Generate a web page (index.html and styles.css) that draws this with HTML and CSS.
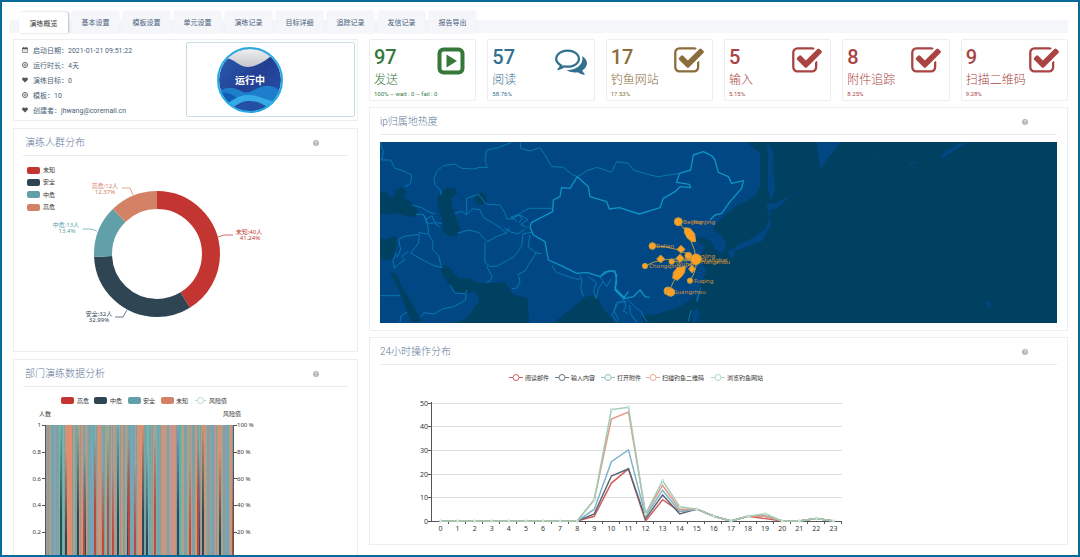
FILE: index.html
```html
<!DOCTYPE html>
<html lang="zh-CN">
<head>
<meta charset="utf-8">
<title>演练概览</title>
<link rel="stylesheet" href="styles.css">
</head>
<body>
<svg class="defs" aria-hidden="true">
  <symbol id="check" viewBox="0 0 1792 1792"><path d="M1472 930v318q0 119-84.5 203.5t-203.5 84.5h-832q-119 0-203.5-84.5t-84.5-203.5v-832q0-119 84.5-203.5t203.5-84.5h832q63 0 117 25 15 7 18 23 3 17-9 29l-49 49q-10 10-23 10-3 0-9-2-23-6-45-6h-832q-66 0-113 47t-47 113v832q0 66 47 113t113 47h832q66 0 113-47t47-113v-254q0-13 9-22l64-64q10-10 23-10 6 0 12 3 20 8 20 29zm231-489l-814 814q-24 24-57 24t-57-24l-430-430q-24-24-24-57t24-57l110-110q24-24 57-24t57 24l263 263 647-647q24-24 57-24t57 24l110 110q24 24 24 57t-24 57z"/></symbol>
  <symbol id="comments" viewBox="0 0 1792 1792"><path d="M704 384q-153 0-286 52t-211.5 141-78.5 191q0 82 53 158t149 132l97 56-35 84q34-20 62-39l44-31 53 10q78 14 153 14 153 0 286-52t211.5-141 78.5-191-78.5-191-211.5-141-286-52zm0-128q191 0 353.5 68.5t256.5 186.5 94 257-94 257-256.5 186.5-353.5 68.5q-86 0-176-16-124 88-278 128-36 9-86 16h-3q-11 0-20.5-8t-11.5-21q-1-3-1-6.500t.5-6.500 2-6l2.500-5 3.500-5.500 4-5 4.500-5 4-4.500q5-6 23-25t26-29.500 22.500-29 25-38.500 20.500-44q-124-72-195-177t-71-224q0-139 94-257t256.500-186.500 353.500-68.500zm822 1169q10 24 20.500 44t25 38.500 22.500 29 26 29.500 23 25q1 1 4 4.500t4.500 5 4 5 3.500 5.500l2.500 5 2 6 .5 6.500-1 6.500q-3 14-13 22t-22 7q-50-7-86-16-154-40-278-128-90 16-176 16-271 0-472-132 58 4 88 4 161 0 309-45t264-129q125-92 192-212t67-254q0-77-23-152 129 71 204 178t75 230q0 120-71 224.500t-195 176.500z"/></symbol>
  <symbol id="play" viewBox="0 0 28 28"><rect x="2.500" y="2.500" width="23" height="23" rx="4" fill="none" stroke="currentColor" stroke-width="4"/><path d="M9.500 7.500v13l10.500-6.500z"/></symbol>
  <symbol id="calendar" viewBox="0 0 14 14"><path d="M1 2.500h12v10.500H1z" fill="none" stroke="currentColor" stroke-width="1.500"/><path d="M1 2h12v3H1zM3 0h2v3H3zM9 0h2v3H9z"/><path d="M3 7h8M3 10h8M5 5v8M9 5v8" stroke="currentColor" stroke-width=".3"/></symbol>
  <symbol id="plus" viewBox="0 0 14 14"><circle cx="7" cy="7" r="6" fill="none" stroke="currentColor" stroke-width="2"/><path d="M7 3.500v7M3.500 7h7" stroke="currentColor" stroke-width="1.500"/></symbol>
  <symbol id="heart" viewBox="0 0 14 14"><path d="M7 13 1 7C-1 4 1 1 4 1c1.500 0 2.500 1 3 2 .5-1 1.500-2 3-2 3 0 5 3 3 6z"/></symbol>
  <symbol id="help" viewBox="0 0 14 14"><circle cx="7" cy="7" r="7"/><path d="M4.800 5.500C5 2.500 9.500 3 9.200 5.500 9 7 7 7 7 8.500M7 10v1.800" fill="none" stroke="#fff" stroke-width="1.600"/></symbol>
</svg>
<div class="frame">
  <nav class="tabs">
    <button class="tab active">演练概览</button>
    <button class="tab">基本设置</button>
    <button class="tab">模板设置</button>
    <button class="tab">单元设置</button>
    <button class="tab">演练记录</button>
    <button class="tab">目标详细</button>
    <button class="tab">追踪记录</button>
    <button class="tab">发信记录</button>
    <button class="tab">报告导出</button>
  </nav>
  <main class="columns">
    <div class="col left">
      <section class="panel info">
        <ul class="facts">
          <li><svg><use href="#calendar"/></svg>启动日期：2021-01-21 09:51:22</li>
          <li><svg><use href="#plus"/></svg>运行时长：4天</li>
          <li><svg><use href="#heart"/></svg>演练目标：0</li>
          <li><svg><use href="#plus"/></svg>模板：10</li>
          <li><svg><use href="#heart"/></svg>创建者：jhwang@coremail.cn</li>
        </ul>
        <div class="status">
          <svg viewBox="217 47 66 66" role="img" aria-label="运行中">
            <defs>
              <linearGradient id="deep" x1="0" y1="0" x2="1" y2="1"><stop offset="0" stop-color="#2c62b4"/><stop offset=".5" stop-color="#233f92"/><stop offset="1" stop-color="#2456ae"/></linearGradient>
              <linearGradient id="silver" x1="0" y1="0" x2="0" y2="1"><stop offset="0" stop-color="#f4f4f4"/><stop offset="1" stop-color="#c4c6ca"/></linearGradient>
              <clipPath id="disc"><circle cx="250" cy="80" r="31"/></clipPath>
            </defs>
            <g clip-path="url(#disc)">
              <path fill="url(#deep)" d="M217 47h66v66h-66z"/>
              <path fill="url(#silver)" d="M217 47h66v12c-8-6-12-3-17 1-8 5-13 7-18 7-8 0-12-6-18-8-5-1-8 0-13 2z"/>
              <path fill="#1d7fcb" d="M217 92c12-7 18-4 26 0 8 3 16-8 26-6 6 0 10 4 14 8v20h-66z"/>
              <path fill="#0f5db4" d="M217 93c10-2 16 2 22 6l10 14h-32z"/>
              <path fill="#35aae6" d="M221 106c10-3 14-11 28-11 12 0 16 6 31 7l-8 14h-46z"/>
              <path fill="#2450a4" d="M234 107c6-5 10-6 16-6s12 2 18 7l-8 6h-20z"/>
            </g>
            <circle cx="250" cy="80" r="32" fill="none" stroke="#27aae1" stroke-width="2"/>
            <text class="status-text" x="250" y="84">运行中</text>
          </svg>
        </div>
      </section>

      <section class="panel">
        <header><h2>演练人群分布</h2><button class="help" aria-label="帮助"><svg><use href="#help"/></svg></button></header>
        <svg class="chart" viewBox="23 156 325 195">
          <g class="legend">
            <rect x="27" y="167" width="13" height="7" rx="2" fill="#c23531"/><text x="43" y="172">未知</text>
            <rect x="27" y="179" width="13" height="7" rx="2" fill="#2f4554"/><text x="43" y="184">安全</text>
            <rect x="27" y="191" width="13" height="7" rx="2" fill="#61a0a8"/><text x="43" y="197">中危</text>
            <rect x="27" y="204" width="13" height="7" rx="2" fill="#d48265"/><text x="43" y="209">高危</text>
          </g>
          <g class="ring" transform="rotate(-90 157 254)">
            <circle cx="157" cy="254" r="54" pathLength="100" stroke="#c23531" stroke-dasharray="41.240 58.760"/>
            <circle cx="157" cy="254" r="54" pathLength="100" stroke="#2f4554" stroke-dasharray="32.990 67.010" stroke-dashoffset="-41.240"/>
            <circle cx="157" cy="254" r="54" pathLength="100" stroke="#61a0a8" stroke-dasharray="13.400 86.600" stroke-dashoffset="-74.230"/>
            <circle cx="157" cy="254" r="54" pathLength="100" stroke="#d48265" stroke-dasharray="12.370 87.630" stroke-dashoffset="-87.630"/>
          </g>
          <g class="leaders">
            <path stroke="#c23531" d="M218 237l6-2h9"/><path stroke="#2f4554" d="M127 310l-4 7h-8"/>
            <path stroke="#61a0a8" d="M97 231l-6-2h-8"/><path stroke="#d48265" d="M133 195l-3-7h-8"/>
          </g>
          <g class="slice-labels">
            <g fill="#c23531"><text x="249" y="234">未知:40人</text><text x="250" y="240">41.24%</text></g>
            <g fill="#2f4554"><text x="99" y="316">安全:32人</text><text x="99" y="322">32.99%</text></g>
            <g fill="#61a0a8"><text x="66" y="227">中危:13人</text><text x="67" y="233">13.4%</text></g>
            <g fill="#d48265"><text x="105" y="188">高危:12人</text><text x="105" y="194">12.37%</text></g>
          </g>
        </svg>
      </section>

      <section class="panel">
        <header><h2>部门演练数据分析</h2><button class="help" aria-label="帮助"><svg><use href="#help"/></svg></button></header>
        <svg class="chart" viewBox="23 386 325 194">
          <g class="legend">
            <rect x="61" y="396" width="13" height="7" rx="2" fill="#c23531"/><text x="77" y="402">高危</text>
            <rect x="94" y="396" width="13" height="7" rx="2" fill="#2f4554"/><text x="110" y="402">中危</text>
            <rect x="128" y="396" width="13" height="7" rx="2" fill="#61a0a8"/><text x="143" y="402">安全</text>
            <rect x="161" y="396" width="13" height="7" rx="2" fill="#d48265"/><text x="176" y="402">未知</text>
            <path d="M195 399.500h11" stroke="#b5dccd"/><circle cx="200.500" cy="399.500" r="3" fill="#fff" stroke="#b5dccd"/><text x="209" y="402">风险值</text>
            <text x="39" y="415">人数</text><text x="223" y="415">风险值</text>
          </g>
          <g id="bars"></g>
          <path class="axis" d="M45.500 424v134M233.500 424v134M42 424.500h3M42 451.500h3M42 477.500h3M42 504.500h3M42 531.500h3M234 424.500h3M234 451.500h3M234 477.500h3M234 504.500h3M234 531.500h3"/>
          <g class="ticks end"><text x="41" y="426">1</text><text x="41" y="453">0.8</text><text x="41" y="480">0.6</text><text x="41" y="506">0.4</text><text x="41" y="533">0.2</text></g>
          <g class="ticks"><text x="237" y="426">100 %</text><text x="237" y="453">80 %</text><text x="237" y="480">60 %</text><text x="237" y="506">40 %</text><text x="237" y="533">20 %</text></g>
        </svg>
      </section>
    </div>

    <div class="col right">
      <div class="stats">
        <article class="panel stat green"><div><strong>97</strong><svg><use href="#play"/></svg></div><h3>发送</h3><small>100% – wait : 0 – fail : 0</small></article>
        <article class="panel stat blue"><div><strong>57</strong><svg class="wide"><use href="#comments"/></svg></div><h3>阅读</h3><small>58.76%</small></article>
        <article class="panel stat brown"><div><strong>17</strong><svg class="wide"><use href="#check"/></svg></div><h3>钓鱼网站</h3><small>17.53%</small></article>
        <article class="panel stat red"><div><strong>5</strong><svg class="wide"><use href="#check"/></svg></div><h3>输入</h3><small>5.15%</small></article>
        <article class="panel stat red"><div><strong>8</strong><svg class="wide"><use href="#check"/></svg></div><h3>附件追踪</h3><small>8.25%</small></article>
        <article class="panel stat red"><div><strong>9</strong><svg class="wide"><use href="#check"/></svg></div><h3>扫描二维码</h3><small>9.28%</small></article>
      </div>

      <section class="panel map-panel">
        <header><h2>ip归属地热度</h2><button class="help" aria-label="帮助"><svg><use href="#help"/></svg></button></header>
        <svg class="chart map" viewBox="0 0 677 181">
          <path class="sea" d="M0 0h677v181H0z"/>
          <path class="land" d="M0 0H380V181H0z"/>
          <g transform="translate(-10 -7) scale(.333333)">
            <path class="sea" d="M30 170l18 2 10 15 20-8-5-12 20-10 15 8-8 20 18 14 22 18 4 20-14 10-30-6-30-8-18 5-22-2zM30 310l22 4 20-12 10 8-4 30-10 32-20 4-18-6zM60 410l20 10 15 35 20 30 20 35 20 42h-30l-20-50-15-40z"/>
            <path class="sea" d="M205 180l25-22 25 2 8 14-20 18 5 30 12 30 10 28-8 22-24 2-20-16 2-28-12-32-6-24zM315 182l18-12 15 14 2 16-14 10-20-8z"/>
            <path class="sea" d="M212 388l25 8 30 35 30-2 20 14 40 2 48-4 25 38 42 10 6 80H240l50-20 34-46 4-16-20-18-20 8-28-4-24-26-22-34zM548 565l55-42 40-36 38-8 16 40 40 46z"/>
          </g>
          <g transform="translate(220 -7) scale(.333333)">
            <path class="sea" d="M440 20l20 20 30 20 5 30-8 50-22 42-30 20-28 12-22 20-22 18-20 20-2 14 20 12 14 20 4 22-14 14-20-10-10-24-22-10-20-4-6 8 18 14 10 10-14 22 2 22 14 22-6 30-18 36-30 30-34 20-40 12-28 8-22-4-14 12 10 28 14 26h450V20z"/>
            <path class="land" d="M502 22l18 30-2 50 8 60-12 34-12-40 2-50zM500 206l30-2 20-12 16-4-14 14-20 16-22 8-2 20 4 26-14 24-12 22-26 10-26 8-18 10-18-2 20-16 30-14 20-12 28-20 10-30zM385 345l14-4 8 12-10 16-10-8zM288 475l10-14 4 14-6 28-8-10zM278 530l14-10 8 14-10 28h-12zM160 512l12-4 4 12-10 4zM650 22h70l-20 28-22 26-14 26-6-20z"/>
            <circle class="land" cx="585" cy="181" r="3"/>
          </g>
          <g transform="translate(440 -7) scale(.333333)"><path class="land" d="M265 84l20-4 4 4-18 4zM362 62l20-16 30-18 28-6-24 16-34 22-14 8zM168 62l6-2 2 6zM496 500l10 0 8 12-8 6z"/></g>
          <g class="borders" transform="translate(-10 -7) scale(.333333)">
            <path d="M30 22l10 28-5 25 27 0 13 25 30 10 20 10-3 25-17 10M425 22l-40 16-35 7-5 30 7 23-22-1-20 5-35-2-20-13-35 5-20 18-8 20 4 22 14 12 4 16M452 22v18l28 8 30-10 15 22 20 35 35 2 25 21 17 7 30-18 28-10 45 15 15-32"/>
            <path d="M290 240v-50l35-12 25 30 40 2 14 22 6 20 20 0 24-20 22-12h72M255 235l20-6 15 10 18-18 22 4 10 22 50 30 20 20M262 295l35-10 30 8 24 28 28-16 28-10 12-18M345 322l0 60 14 12 20 0 30-16 24-14 22-30 4-38 28-4M350 392l8 18 8 12-4 15-12 5M404 280l20 12 20 4 20-12M420 250l30-10 24 14-22 14 20 10M440 260l-16-14 22-8 10 14-10 12"/>
            <path d="M125 210l30 8 24 14 16 4M138 238l22 0 8 16 18-12 8 20 20 4M165 245l10 22 16-4 18 12M160 238l14 36 2 24 14 24-4 20 20 20 6 24 4 12-24-6-40-20-30-18 24-30 2-26-46 6-16 10 6 30-12 24M175 298l-30-6M115 350l-20 14 10 10-20 14-12 12-4-24 10-22M30 482h60M90 562l4-20 16-10M153 545l8-12 30 4 28-16 32-6 36-20 2-30M240 450l14 24 32 2"/>
            <path d="M500 350l-14 24-22 34-20 10 6 22-8 18-16 4M480 300l-6 36 24 18 16 2M545 390l14 22 40 14 30 8M630 420l6 20-4 20 8 24M655 425l24 18-8 24 8 24 6-30 14-20M690 425l20 30 14-24M770 500l-30 2-8 24 14 30M760 490l8 24-8 14 14 8"/>
          </g>
          <g class="borders" transform="translate(220 -7) scale(.333333)">
            <path d="M50 80l35 5 15 20 50 15 25 5 60-10M75 490l-24 20-14 30 14 22M80 490l24 24 20 18 16 28M90 510l0 24 20 28M290 500l6-24 6-18M275 525l-6 16-4 18"/>
            <path class="china" d="M-68 125l-22 35-25-2-5 27-20 10-2 35-63 32-5 13 10 25 35 20 10 55 45 20 40 20 30-3 40 13 25-17 20 0 5 32-5 25 25 25 15-20M-68 125l33 30 5 30 50 15 8 22 30-4 60 19 62-19 10-28 35-20 15-15 32 3-4-10-38-6 8-27 34-10 8-45 30-10 25 12 10 13 10 37 30 13 10 20 35-8-5 23-35 40-25 35-20 5-15 15M0 425l15-14 25-3 10 12-5 40 30 30 25-5 20-20 15 20 13 2"/>
          </g>
          <g class="routes" transform="translate(220 -7) scale(.333333)">
            <path d="M235 260q45 50 55 115M157 333q80 0 135 42M135 393q50-30 155-18M215 380l75-5M270 437q20-30 20-62M207 470q20-60 83-95"/>
            <g fill="#ffa022">
              <circle cx="235" cy="260" r="12"/><circle cx="157" cy="333" r="10"/><circle cx="135" cy="393" r="8"/><circle cx="215" cy="380" r="8"/><circle cx="270" cy="437" r="8"/><circle cx="204" cy="468" r="12"/><circle cx="212" cy="472" r="12"/><circle cx="288" cy="373" r="16"/><circle cx="265" cy="362" r="10"/>
              <path d="M254 278l16 2 14 16 3 24-12 0-14-12-8-16zM182 360l12 12-12 12-12-12zM240 358l12 12-12 12-12-12zM243 331l12 12-12 12-12-12zM276 390l10 12-10 12-10-12zM232 398l24-4-2 18-10 14-12 10-14-6 2-18z"/>
            </g>
          </g>
          <g class="cities">
            <text x="303" y="82">Beijing</text><text x="313" y="82">Nanjing</text>
            <text x="276" y="106">Dalian</text><text x="269" y="126">Chongqing</text><text x="296" y="124">Wuhan</text>
            <text x="313" y="116">Nanjing</text><text x="321" y="120">Shanghai</text><text x="321" y="122">Hangzhou</text>
            <text x="314" y="141">Fuqing</text><text x="293" y="152">Guangzhou</text>
          </g>
        </svg>
      </section>

      <section class="panel">
        <header><h2>24小时操作分布</h2><button class="help" aria-label="帮助"><svg><use href="#help"/></svg></button></header>
        <svg class="chart" viewBox="380 365 677 179">
          <g id="hours"></g>
        </svg>
      </section>
    </div>
  </main>
</div>
<script src="charts.js"></script>
</body>
</html>
```

FILE: styles.css
```css
* { box-sizing: border-box; }
body {
  margin: 0;
  background: #fff;
  color: #4a5f78;
  font-family: Roboto, "Noto Sans CJK SC", sans-serif;
  font-size: 7px;
}
h2, h3, ul { margin: 0; padding: 0; }
h2, h3 { font-weight: 300; }
button { border: 0; padding: 0; background: none; font: inherit; color: inherit; }
svg { fill: currentColor; }
.defs { position: absolute; width: 0; height: 0; }

.frame {
  height: 100vh;
  overflow: hidden;
  border: 2px solid #086a9a;
  padding: 9px 10px 0 7px;
}

.tabs {
  display: flex;
  align-items: flex-end;
  gap: 4px;
  height: 22px;
  padding-left: 10px;
  background: linear-gradient(transparent 9px, #f5f6fa 9px);
}
.tab {
  width: 47px;
  height: 22px;
  border-radius: 3px 3px 0 0;
  background: #f5f6fa;
  box-shadow: 0 0 2px #e6e8ee;
  color: #4a607a;
}
.tab.active {
  width: 49px;
  height: 21px;
  background: #fff;
  box-shadow: 1px 0 2px #b4b7c0;
  color: #333;
}

.columns {
  display: grid;
  grid-template-columns: 345fr 699fr;
  gap: 11px;
  padding: 6px 0 0 4px;
}
.col { display: flex; flex-direction: column; min-width: 0; }
.left { gap: 7px; }
.right { gap: 6px; }
.panel { border: 1px solid #ebeef2; background: #fff; padding: 0 10px; }
.left .panel { padding: 0 9px; }

.panel header {
  display: flex;
  align-items: center;
  justify-content: space-between;
  height: 27px;
  padding: 2px 29px 0 0;
  border-bottom: 1px solid #e8ebf0;
}
.left header { padding-left: 2px; }
h2 { font-size: 10px; line-height: 16px; color: #62799a; }
.help { display: flex; color: #b4b4b4; }
.help svg { width: 6px; height: 6px; }
.chart { display: block; width: 100%; height: auto; }
.map-panel { padding-bottom: 7px; }
.map { margin-top: 7px; }

.left .info {
  display: grid;
  grid-template-columns: 164fr 170fr;
  padding: 2px 2px 3px 8px;
}
.facts { list-style: none; }
.facts li { display: flex; align-items: center; gap: 5px; height: 15px; white-space: nowrap; }
.facts svg { width: 6px; height: 6px; color: #555; }
.status {
  display: flex;
  align-items: center;
  padding-left: 30px;
  border: 1px solid #c9dde5;
  border-radius: 2px;
}
.status svg { width: 66px; height: 66px; }
.status-text { fill: #fff; font-size: 10px; font-weight: 700; text-anchor: middle; }

.stats { display: grid; grid-template-columns: repeat(6, 1fr); gap: 11px; }
.stat { height: 62px; padding: 7px 7px 0 4px; border-radius: 2px; white-space: nowrap; }
.stat div { display: flex; justify-content: space-between; height: 25px; }
.stat strong { font-size: 20px; line-height: 20px; font-weight: 500; }
.stat div svg { width: 28px; height: 28px; margin-right: 3px; }
.stat div .wide { width: 32px; height: 32px; margin: -2px 0 0; }
.stat h3 { font-size: 12px; line-height: 17px; }
.stat small { display: block; font-size: 6px; line-height: 10px; }
.green { color: #35783a; }
.blue { color: #31708f; }
.brown { color: #8a6d3b; }
.red { color: #a94442; }

.legend text { font-size: 6px; fill: #333; }
.ticks { font-family: "Noto Sans", sans-serif; font-size: 6px; fill: #333; }
.hours { font-size: 7px; }
.end { text-anchor: end; }
.middle { text-anchor: middle; }
.ring { fill: none; stroke-width: 18px; }
.leaders { fill: none; stroke-width: 1px; opacity: .7; }
.slice-labels { font-size: 6px; text-anchor: middle; font-family: "Noto Sans", "Noto Sans CJK SC", sans-serif; }
.axis { stroke: #555; fill: none; }
.grid { stroke: #ddd; fill: none; }

.sea { fill: #004060; }
.land { fill: #004784; }
.borders { fill: none; stroke: #0877b0; stroke-width: 3px; stroke-linejoin: round; }
.borders .china { stroke: #0f93c6; stroke-width: 4px; }
.routes { fill: none; stroke: #b99a4a; stroke-width: 3px; }
.cities { fill: #f0a030; font-family: "Noto Sans", sans-serif; font-size: 6px; opacity: .85; }
```

FILE: charts.js
```js
const NS = 'http://www.w3.org/2000/svg';
function add(parent, tag, attrs, text) {
  const el = document.createElementNS(NS, tag);
  for (const key in attrs) el.setAttribute(key, attrs[key]);
  if (text !== undefined) el.textContent = text;
  parent.appendChild(el);
}

const bars = document.getElementById('bars');
const tones = { G: '#9b9c9b', O: '#e38d6c', T: '#66abb3', B: '#b79c86', S: '#80b3a0', U: '#84a0b4', P: '#b39a9c' };
const stripes = 'GGBTUGTSTSBOOOBTSOOTBGTUTSBOGTSBTOBGTSOTBGTUTPBOOBTSTGBSTUBOBTPPOBUTSOTBGBTOTSBOBTGTUOBOBTUTBOG';
[...stripes].slice(0, 94).forEach((s, i) => {
  add(bars, 'rect', { x: 45 + i * 2, y: 424, width: 2, height: 134, fill: tones[s] });
  if (i % 4 === 1) add(bars, 'rect', { x: 46 + i * 2, y: 424, width: 1, height: 134, fill: '#8f9a97' });
});
const navy = [60, 65, 77, 84, 117, 127, 142, 146, 177, 198, 202, 219];
const red = [83, 94, 102, 107, 112, 128, 134, 154, 189, 197, 232];
navy.forEach((x, i) => add(bars, 'path', { d: `M${x + 1} ${i % 2 ? 450 : 425}l1 90v43h-2v-43z`, fill: '#294a58' }));
red.forEach((x, i) => add(bars, 'path', { d: `M${x + 1} ${i % 2 ? 435 : 465}l1 70v60h-2v-60z`, fill: '#bd4a42' }));

const hours = document.getElementById('hours');
const left = 432, base = 521, step = 410 / 24, unit = 2.37;
let grid = '', axis = `M${left - .5} 402V${base}M${left} ${base + .5}H842`;
const labels = document.createElementNS(NS, 'g');
labels.setAttribute('class', 'ticks hours');
for (let v = 0; v <= 50; v += 10) {
  const y = Math.round(base - v * unit) + .5;
  if (v) grid += `M${left} ${y}H842`;
  axis += `M${left - 4} ${y}h4`;
  add(labels, 'text', { x: left - 4, y: y + 2, class: 'end' }, v);
}
for (let h = 0; h < 24; h++) {
  axis += `M${Math.round(left + (h + 1) * step) - .5} ${base}v3`;
  add(labels, 'text', { x: left + (h + .5) * step, y: 531, class: 'middle' }, h);
}
add(hours, 'path', { d: grid, class: 'grid' });
add(hours, 'path', { d: axis, class: 'axis' });
hours.appendChild(labels);

const zero = [0, 0, 0, 0, 0, 0, 0, 0, 0];
const series = [
  ['阅读邮件', '#d2605e', '#d2605e', 509, [2, 16, 22, 0, 9, 4, 5, 2, 0, 2, 1, 0, 0, 1, 0]],
  ['输入内容', '#5a6674', '#6b7480', 555, [3, 19, 22, 1, 11, 3, 5, 2, 0, 2, 2, 0, 0, 1, 0]],
  ['打开附件', '#7db5c8', '#86c4b4', 601, [5, 25, 30, 2, 13, 4, 5, 2, 0, 2, 2, 0, 0, 1, 0]],
  ['扫描钓鱼二维码', '#e39a85', '#e8a796', 646, [9, 43, 46, 3, 15, 5, 5, 2, 0, 2, 2, 0, 0, 1, 0]],
  ['浏览钓鱼网站', '#9fcdb8', '#b0d6cc', 711, [9, 47, 48, 3, 17, 6, 5, 2, 0, 2, 3, 0, 0, 1, 0]]
];
const legend = document.createElementNS(NS, 'g');
legend.setAttribute('class', 'legend');
series.forEach(([name, color, mark, x, values], index) => {
  const pts = zero.concat(values).map((v, i) => [left + (i + .5) * step, base - v * unit]);
  add(hours, 'polyline', { points: pts.join(' '), fill: 'none', stroke: color, 'stroke-width': 1.5 });
  if (index === 4) pts.forEach(p => add(hours, 'circle', { cx: p[0], cy: p[1], r: 1.2, fill: '#eef6f2', stroke: color, 'stroke-width': .6 }));
  add(legend, 'path', { d: `M${x} 377.500h14`, stroke: mark });
  add(legend, 'circle', { cx: x + 7, cy: 377.5, r: 3, fill: '#fff', stroke: mark });
  add(legend, 'text', { x: x + 16, y: 380 }, name);
});
hours.appendChild(legend);
```
